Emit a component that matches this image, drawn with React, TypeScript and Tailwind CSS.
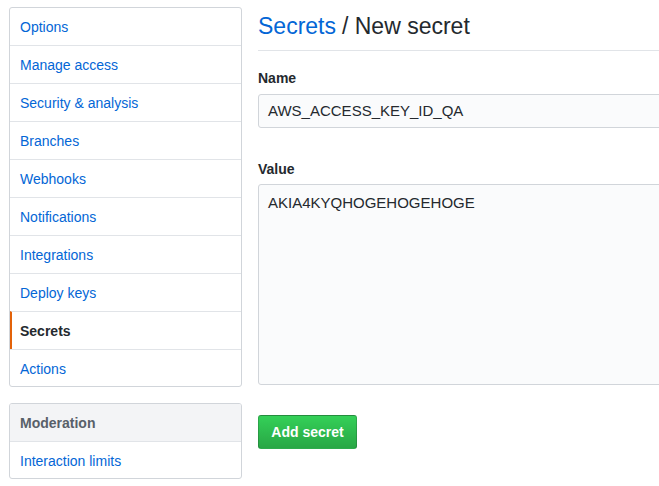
const MENU = [
  "Options",
  "Manage access",
  "Security & analysis",
  "Branches",
  "Webhooks",
  "Notifications",
  "Integrations",
  "Deploy keys",
  "Secrets",
  "Actions",
];

export default function App() {
  return (
    <div
      className="w-[659px] h-[486px] overflow-hidden bg-white text-[#24292e]"
      style={{ fontFamily: '"Liberation Sans", Arial, sans-serif' }}
    >
      <div className="flex pl-[9px] pt-[7px]">
        <div className="w-[233px] shrink-0">
          <nav className="border border-[#d1d5da] rounded-[3px] overflow-hidden">
            {MENU.map((item, idx) => {
              const selected = item === "Secrets";
              const edge = idx === 0 || idx === MENU.length - 1;
              return (
                <div
                  key={item}
                  className={`${edge ? "h-[37px]" : "h-[38px]"} pt-[2px] flex items-center text-[14px] ${
                    idx > 0 ? "border-t border-[#e1e4e8]" : ""
                  } ${
                    selected
                      ? "border-l-2 border-l-[#e36209] pl-[8px] font-bold text-[#24292e]"
                      : "pl-[10px] text-[#0366d6]"
                  }`}
                >
                  {item}
                </div>
              );
            })}
          </nav>

          <div className="mt-[16px] border border-[#d1d5da] rounded-[3px] overflow-hidden">
            <div className="h-[37px] pt-[2px] flex items-center pl-[10px] bg-[#f3f4f6] text-[14px] font-bold text-[#586069]">
              Moderation
            </div>
            <div className="h-[37px] pt-[2px] flex items-center pl-[10px] border-t border-[#e1e4e8] text-[14px] text-[#0366d6]">
              Interaction limits
            </div>
          </div>
        </div>

        <main className="ml-[16px] w-[460px] shrink-0">
          <h2 className="h-[44px] pt-[4px] flex items-start text-[23px] leading-[30px] border-b border-[#e1e4e8]">
            <span className="text-[#0366d6]">Secrets</span>
            <span className="ml-[6px]">/ New secret</span>
          </h2>

          <label className="block mt-[17px] text-[14px] leading-[20px] font-bold">Name</label>
          <div className="mt-[6px] h-[34px] flex items-center px-[9px] bg-[#fafbfc] border border-[#d1d5da] rounded-[3px] text-[15px]">
            AWS_ACCESS_KEY_ID_QA
          </div>

          <label className="block mt-[31px] text-[14px] leading-[20px] font-bold">Value</label>
          <div className="mt-[5px] h-[201px] px-[9px] pt-[7px] bg-[#fafbfc] border border-[#d1d5da] rounded-[3px] text-[15px]">
            AKIA4KYQHOGEHOGEHOGE
          </div>

          <button className="mt-[30px] h-[34px] w-[99px] rounded-[3px] border border-[#1b1f23]/20 bg-gradient-to-b from-[#34d058] to-[#28a745] text-white text-[14px] font-bold">
            Add secret
          </button>
        </main>
      </div>
    </div>
  );
}
